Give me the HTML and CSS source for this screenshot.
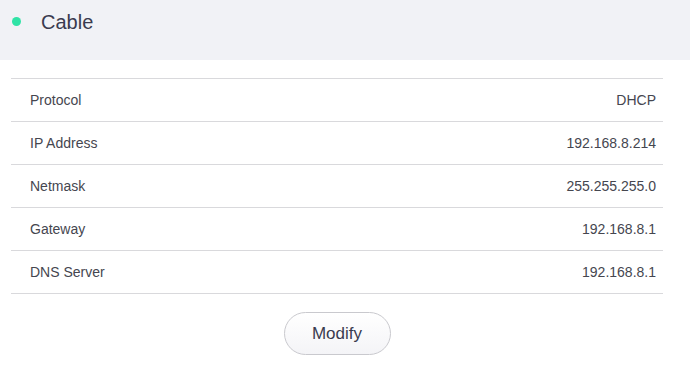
FILE: index.html
```html
<!DOCTYPE html>
<html>
<head>
<meta charset="utf-8">
<link rel="stylesheet" href="styles.css">
</head>
<body>
  <header class="header">
    <span class="status-dot"></span>
    <h1 class="title">Cable</h1>
  </header>
  <main class="content">
    <div class="info-table">
      <div class="row"><span class="label">Protocol</span><span class="value">DHCP</span></div>
      <div class="row"><span class="label">IP Address</span><span class="value">192.168.8.214</span></div>
      <div class="row"><span class="label">Netmask</span><span class="value">255.255.255.0</span></div>
      <div class="row"><span class="label">Gateway</span><span class="value">192.168.8.1</span></div>
      <div class="row"><span class="label">DNS Server</span><span class="value">192.168.8.1</span></div>
    </div>
    <div class="actions">
      <button class="btn">Modify</button>
    </div>
  </main>
</body>
</html>
```
FILE: styles.css
```css
html, body {
  margin: 0;
  padding: 0;
  background: #ffffff;
  font-family: "Liberation Sans", Arial, sans-serif;
}

.header {
  height: 60px;
  box-sizing: border-box;
  background: #f1f2f6;
  display: flex;
  align-items: flex-start;
  padding: 10px 0 0 12px;
}

.status-dot {
  width: 9px;
  height: 9px;
  border-radius: 50%;
  background: #30e3a6;
  margin-top: 7px;
  flex: none;
}

.title {
  margin: 0 0 0 20px;
  font-size: 20px;
  line-height: 24px;
  font-weight: normal;
  color: #3a3b4f;
}

.content {
  margin: 18px 27px 0 11px;
}

.info-table {
  border-bottom: 1px solid #d9d9dc;
}

.row {
  height: 42px;
  border-top: 1px solid #d9d9dc;
  display: flex;
  align-items: center;
  justify-content: space-between;
  padding: 0 7px 0 19px;
  font-size: 14px;
  color: #45464f;
}

.actions {
  display: flex;
  justify-content: center;
  margin-top: 18px;
}

.btn {
  width: 107px;
  height: 43px;
  border: 1px solid #c9c9ce;
  border-radius: 22px;
  background: linear-gradient(#ffffff, #f4f4f7);
  font-family: "Liberation Sans", Arial, sans-serif;
  font-size: 17px;
  color: #3a3b4f;
  padding: 0;
  cursor: pointer;
}
```
